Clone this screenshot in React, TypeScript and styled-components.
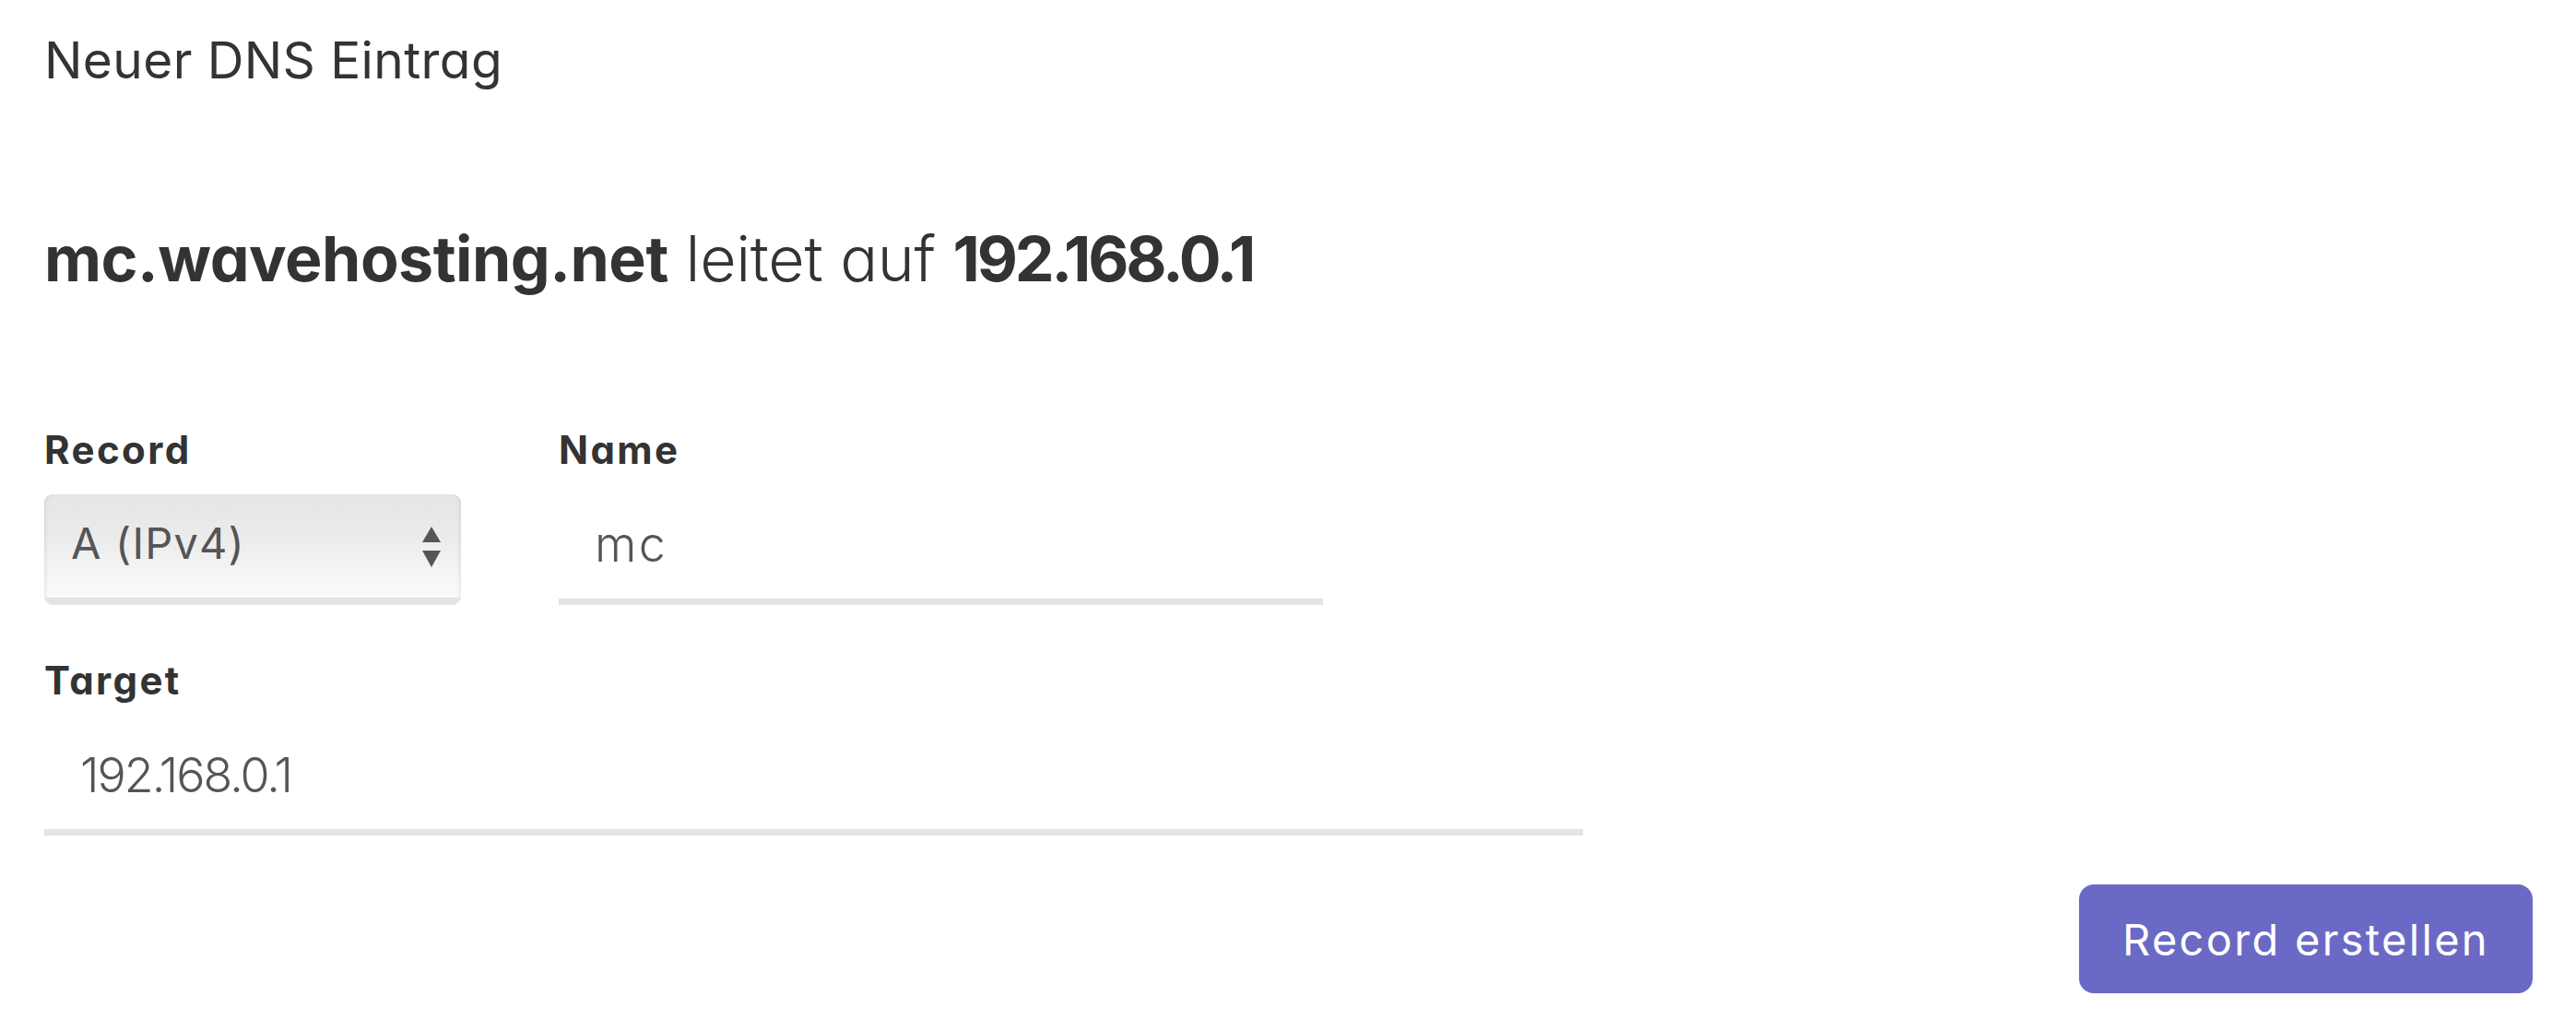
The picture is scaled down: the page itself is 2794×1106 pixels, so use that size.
import React from "react";
import styled, { createGlobalStyle } from "styled-components";

const GlobalStyle = createGlobalStyle`
  html, body {
    margin: 0;
    padding: 0;
    background: #ffffff;
  }
  body {
    font-family: Inter, "Liberation Sans", sans-serif;
    font-feature-settings: "cv11" 1;
    color: #333333;
  }
`;

const Page = styled.div`
  padding: 32px 47px 28px 48px;
  display: flex;
  flex-direction: column;
`;

const Title = styled.h1`
  margin: 0;
  font-size: 55px;
  line-height: 66px;
  font-weight: 400;
  letter-spacing: 0.4px;
  color: #333333;
`;

const Summary = styled.h2`
  margin: 141px 0 0;
  font-size: 68px;
  line-height: 82px;
  font-weight: 300;
  letter-spacing: -0.3px;
  color: #333333;
`;

const Strong = styled.strong<{ $spacing?: number }>`
  font-weight: 700;
  letter-spacing: ${(p) => p.$spacing ?? 0}px;
`;

const Form = styled.form`
  margin-top: 142px;
  display: flex;
  flex-direction: column;
`;

const Row = styled.div`
  display: flex;
  gap: 106px;
  align-items: flex-start;
`;

const Field = styled.div<{ $width: number; $top?: number }>`
  display: flex;
  flex-direction: column;
  gap: 23px;
  width: ${(p) => p.$width}px;
  margin-top: ${(p) => p.$top ?? 0}px;
`;

const Label = styled.label`
  font-size: 42px;
  line-height: 50px;
  font-weight: 700;
  letter-spacing: 2.4px;
  color: #333333;
`;

const SelectBox = styled.div`
  box-sizing: border-box;
  height: 120px;
  display: flex;
  align-items: center;
  justify-content: space-between;
  padding: 0 22px 6px 29px;
  border-radius: 9px;
  border-bottom: 8px solid #e4e4e4;
  background: linear-gradient(#e5e5e5 0%, #ececec 45%, #fbfbfb 100%);
  box-shadow: inset 4px 0 4px -3px rgba(0, 0, 0, 0.1),
    inset -4px 0 4px -3px rgba(0, 0, 0, 0.1);
  color: #555555;
  font-size: 47px;
  line-height: 1.2;
  letter-spacing: 1.2px;
`;

const Arrows = styled.svg`
  width: 20px;
  height: 44px;
  margin-top: 8px;
`;

const TextInput = styled.input<{ $spacing?: number }>`
  box-sizing: border-box;
  width: 100%;
  height: 120px;
  padding: 0 20px 4px 39px;
  border: 0;
  border-bottom: 7px solid #e4e4e4;
  background: transparent;
  outline: none;
  font-family: Inter, "Liberation Sans", sans-serif;
  font-feature-settings: "cv11" 1;
  font-size: 52px;
  font-weight: 300;
  letter-spacing: ${(p) => p.$spacing ?? 0}px;
  color: #555555;
`;

const Actions = styled.div`
  margin-top: 53px;
  display: flex;
  justify-content: flex-end;
`;

const Button = styled.button`
  box-sizing: border-box;
  width: 492px;
  height: 118px;
  border: 0;
  border-radius: 16px;
  background: #6b69c6;
  color: #ffffff;
  font-family: Inter, "Liberation Sans", sans-serif;
  font-size: 47px;
  font-weight: 400;
  letter-spacing: 2.3px;
  cursor: pointer;
`;

export default function App() {
  return (
    <>
      <GlobalStyle />
      <Page>
        <Title>Neuer DNS Eintrag</Title>
        <Summary>
          <Strong $spacing={-0.5}>mc.wavehosting.net</Strong> leitet auf{" "}
          <Strong $spacing={-3.1}>192.168.0.1</Strong>
        </Summary>
        <Form onSubmit={(e) => e.preventDefault()}>
          <Row>
            <Field $width={452}>
              <Label>Record</Label>
              <SelectBox>
                <span>A (IPv4)</span>
                <Arrows viewBox="0 0 20 44">
                  <polygon points="10,0 20,17 0,17" fill="#555555" />
                  <polygon points="0,26 20,26 10,44" fill="#555555" />
                </Arrows>
              </SelectBox>
            </Field>
            <Field $width={829}>
              <Label>Name</Label>
              <TextInput defaultValue="mc" $spacing={2.5} />
            </Field>
          </Row>
          <Field $width={1669} $top={57}>
            <Label>Target</Label>
            <TextInput defaultValue="192.168.0.1" $spacing={-2} />
          </Field>
          <Actions>
            <Button type="submit">Record erstellen</Button>
          </Actions>
        </Form>
      </Page>
    </>
  );
}
